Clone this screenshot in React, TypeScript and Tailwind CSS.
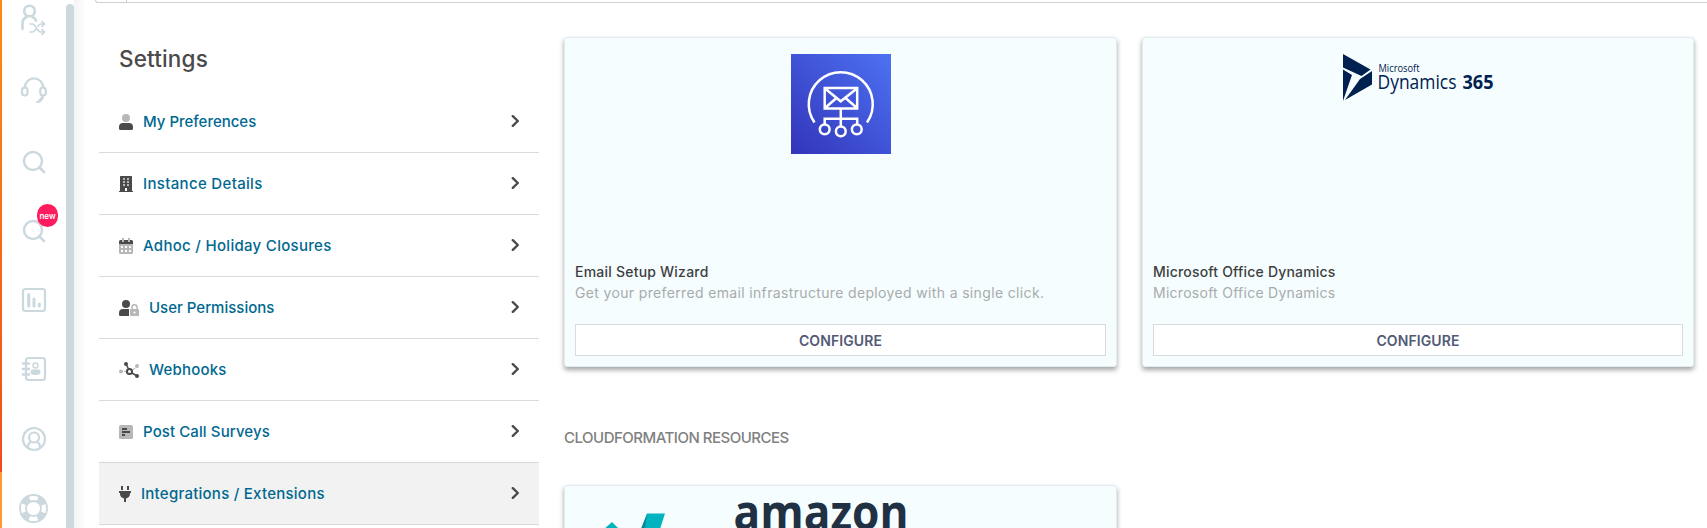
import React from "react";

const MENU_TEXT = "text-[15px] font-medium leading-5 text-[#006890]";

function Chevron() {
  return (
    <svg className="mb-px" width="8" height="12" viewBox="0 0 8 12" fill="none" stroke="#4a4a4a" strokeWidth="2.4">
      <path d="M1.8 1.2 6.8 6 1.8 10.8" strokeLinecap="round" strokeLinejoin="round" />
    </svg>
  );
}

function UserIcon() {
  return (
    <svg className="mt-px" width="14" height="16" viewBox="0 0 14 16">
      <circle cx="7" cy="4" r="4" fill="#b7b7b7" />
      <path d="M0 14.5V13a4 4 0 0 1 4-4h6a4 4 0 0 1 4 4v1.5a1.5 1.5 0 0 1-1.5 1.5h-11A1.5 1.5 0 0 1 0 14.5Z" fill="#4a4a4a" />
    </svg>
  );
}
function BuildingIcon() {
  return (
    <svg className="mt-px" width="14" height="16" viewBox="0 0 14 16">
      <path d="M1.5 0h11a.5.5 0 0 1 .5.5V15h1v1H0v-1h1V.5a.5.5 0 0 1 .5-.5Z" fill="#4a4a4a" />
      <path d="M4 2h2v2H4zM8 2h2v2H8zM4 5h2v2H4zM8 5h2v2H8zM4 8h2v2H4zM8 8h2v2H8z" fill="#b7b7b7" />
      <path d="M6 12h2v3H6z" fill="#fff" />
    </svg>
  );
}
function CalendarIcon() {
  return (
    <svg className="mt-px" width="14" height="16" viewBox="0 0 14 16">
      <path d="M0 6V3.5A1.5 1.5 0 0 1 1.5 2h11A1.5 1.5 0 0 1 14 3.5V6Z" fill="#4a4a4a" />
      <path d="M0 6h14v8.5a1.5 1.5 0 0 1-1.5 1.5h-11A1.5 1.5 0 0 1 0 14.5ZM3 0h2v4H3zM9 0h2v4H9z" fill="#b7b7b7" />
      <path d="M2 8h2v2H2zM6 8h2v2H6zM10 8h2v2h-2zM2 12h2v2H2zM6 12h2v2H6zM10 12h2v2h-2z" fill="#fff" />
    </svg>
  );
}
function UserLockIcon() {
  return (
    <svg className="mt-px" width="20" height="16" viewBox="0 0 20 16">
      <circle cx="7" cy="4" r="4" fill="#4a4a4a" />
      <path d="M0 14.5V13a4 4 0 0 1 4-4h6v7H1.5A1.5 1.5 0 0 1 0 14.5Z" fill="#4a4a4a" />
      <path d="M13 9.5V7.2a2.5 2.5 0 0 1 5 0v2.3" fill="none" stroke="#b7b7b7" strokeWidth="1.5" />
      <rect x="11" y="9" width="9" height="7" rx="1" fill="#b7b7b7" />
      <circle cx="15.5" cy="12.5" r="1.1" fill="#fff" />
    </svg>
  );
}
function WebhookIcon() {
  return (
    <svg className="mt-px" width="20" height="16" viewBox="0 0 20 16">
      <g fill="#b7b7b7">
        <circle cx="2" cy="9.5" r="2" />
        <circle cx="18" cy="4" r="2" />
        <rect x="5" y="9" width="2" height="1" />
        <path d="m13.5 7.5 2.6-2 .6.8-2.6 2z" />
      </g>
      <g fill="none" stroke="#4a4a4a">
        <circle cx="10.5" cy="9.5" r="2.6" strokeWidth="2" />
        <path d="M7.2 2.2 9.5 7M13 11l5 3" strokeWidth="1.5" />
      </g>
      <circle cx="7" cy="2" r="2" fill="#4a4a4a" />
      <circle cx="18" cy="14" r="2" fill="#4a4a4a" />
    </svg>
  );
}
function SurveyIcon() {
  return (
    <svg className="mt-px" width="14" height="16" viewBox="0 0 14 16">
      <rect y="1" width="14" height="14" rx="1.5" fill="#b7b7b7" />
      <path d="M3 4h5v2H3zM3 7h8v2H3zM3 10h3v2H3z" fill="#4a4a4a" />
    </svg>
  );
}
function PlugIcon() {
  return (
    <svg className="mt-px" width="12" height="16" viewBox="0 0 12 16">
      <path d="M2 0h2v4H2zM8 0h2v4H8zM0 5h12v2h-1v1a5 5 0 0 1-4 4.4V16H5v-3.6A5 5 0 0 1 1 8V7H0Z" fill="#4a4a4a" />
    </svg>
  );
}

const MENU = [
  { label: "My Preferences", icon: <UserIcon />, track: "tracking-[-0.01px]" },
  { label: "Instance Details", icon: <BuildingIcon />, track: "tracking-[0.33px]" },
  { label: "Adhoc / Holiday Closures", icon: <CalendarIcon />, track: "tracking-[0.3px]" },
  { label: "User Permissions", icon: <UserLockIcon />, track: "tracking-[0px]" },
  { label: "Webhooks", icon: <WebhookIcon />, track: "tracking-[0.2px]" },
  { label: "Post Call Surveys", icon: <SurveyIcon />, track: "tracking-[0.1px]" },
  { label: "Integrations / Extensions", icon: <PlugIcon />, track: "tracking-[0.25px]", active: true },
];

function Rail() {
  return (
    <svg width="64" height="528" viewBox="2 0 64 528" fill="none" stroke="#cbd8de" strokeWidth="2.2" strokeLinecap="round" strokeLinejoin="round">
      <g>
        <circle cx="29.5" cy="11" r="5.3" strokeWidth="2.6" />
        <path d="M22.5 29v-5.5c0-3 1.5-5.3 4-6.5M32.5 17c1.7.7 2.9 2 3.5 3.5" strokeWidth="2.6" />
        <path d="M30 24h2.5c3 0 4.5 8 8 8h3M30 32h2.5c1.3 0 2-1 2.8-2.3M38 26.2c.8-1.3 1.6-2.2 2.8-2.2H44M42 21.5l2.5 2.5-2.5 2.5M42 29.5l2.5 2.5-2.5 2.5" strokeWidth="1.7" />
      </g>
      <g>
        <rect x="22" y="87.5" width="5.5" height="8" rx="2.7" />
        <rect x="40.3" y="87.5" width="5.5" height="8" rx="2.7" />
        <path d="M24.8 87.5a9.2 9.2 0 0 1 18.4 0M43 95.5c0 3-1 4.5-3.5 4.7M41.5 97.5c0 3-1.5 4.5-4.5 4.5" />
      </g>
      <g>
        <circle cx="33" cy="161" r="9" strokeWidth="2.4" />
        <path d="m39.5 167.5 4.5 4.5" strokeWidth="2.6" />
        <circle cx="33" cy="230" r="9" strokeWidth="2.4" />
        <path d="m39.5 236.5 4.5 4.5" strokeWidth="2.6" />
      </g>
      <g>
        <rect x="23" y="289" width="22" height="22" rx="2.5" />
        <path d="M28.7 294.5v11.5M34 299v7M39.3 304v2" strokeWidth="3" />
      </g>
      <g>
        <rect x="26" y="358" width="19" height="22" rx="2.5" />
        <path d="M23 363.5h6M23 369h6M23 374.5h6" strokeWidth="2.6" />
        <circle cx="35.5" cy="365.5" r="2.5" strokeWidth="1.4" />
        <path d="M30.5 372c0-2 1.5-3 3-2.7 1 .4 2.500 .4 4 0 1.5-.3 3 .7 3 2.7 0 1.5-1 3-5 3s-5-1.5-5-3Z" fill="#cbd8de" stroke="none" />
      </g>
      <g>
        <circle cx="34" cy="439" r="11" />
        <circle cx="34" cy="437.5" r="5" />
        <path d="M28 447.5c0-3 1.2-4.8 3-5.5M40 447.5c0-3-1.2-4.8-3-5.5" />
      </g>
      <g>
        <circle cx="33.5" cy="508.5" r="10.8" strokeWidth="7" strokeDasharray="8.48" strokeDashoffset="-4.24" strokeLinecap="butt" />
        <circle cx="33.5" cy="508.5" r="13.5" strokeWidth="1.8" />
        <circle cx="33.5" cy="508.5" r="7.5" strokeWidth="1.8" />
      </g>
    </svg>
  );
}

function EmailLogo() {
  return (
    <svg width="100" height="100" viewBox="0 0 100 100" fill="none" stroke="#fff" strokeWidth="2.5">
      <defs>
        <linearGradient id="ses" x1="0" y1="1" x2="1" y2="0">
          <stop offset="0" stopColor="#3334b9" />
          <stop offset="1" stopColor="#4d72f3" />
        </linearGradient>
      </defs>
      <rect width="100" height="100" fill="url(#ses)" stroke="none" />
      <path d="M23.5 68.5A32 32 0 1 1 76 68.5" />
      <path d="M33.7 34h32.5v20.5H33.7ZM34 34.5l15.7 12.8 16.2-12.8M34 54l11.5-10M66 54 54.5 44M49.8 54.5V72M33.7 70v-5.2h32.5V70" />
      <circle cx="33.7" cy="75.3" r="4.9" />
      <circle cx="49.8" cy="77.3" r="4.9" />
      <circle cx="65.8" cy="75.3" r="4.9" />
    </svg>
  );
}

function DynamicsLogo() {
  return (
    <svg className="overflow-visible" width="150" height="47" viewBox="0 0 150 47" fill="#002050">
      <path d="M0 0 27.5 15.5 18.5 22 0 13.5ZM0 15.5 9 21 0 47ZM29 17V30.5L2 46 17 25 18.5 24Z" />
      <text x="35.5" y="18" fontSize="11" fontFamily="Open Sans, sans-serif" fontWeight="400" textLength="41" lengthAdjust="spacingAndGlyphs">Microsoft</text>
      <text x="34.5" y="34.7" fontSize="20" fontFamily="Open Sans, sans-serif" fontWeight="400" textLength="79" lengthAdjust="spacingAndGlyphs">Dynamics</text>
      <text x="119.5" y="34.7" fontSize="20" fontFamily="Open Sans, sans-serif" fontWeight="700" textLength="31" lengthAdjust="spacingAndGlyphs">365</text>
    </svg>
  );
}

const CARD = "rounded-[3px] border border-[#e2ebee] bg-[#f5fdff] shadow-[0_3px_5px_rgba(0,0,0,0.36)]";

type CardProps = { title: string; titleTrack: string; text: string; textTrack: string; logo: React.ReactNode };

function Card({ title, titleTrack, text, textTrack, logo }: CardProps) {
  return (
    <article className={`flex h-[330px] flex-col px-2.5 pt-4 pb-2.5 ${CARD}`}>
      <div className="flex h-[207px] shrink-0 items-start justify-center">{logo}</div>
      <h3 className={`text-[14px] font-medium leading-[21px] text-[#3f3f3f] ${titleTrack}`}>{title}</h3>
      <p className={`text-[14px] leading-[21px] text-[#a9abab] ${textTrack}`}>{text}</p>
      <button className="mt-auto h-8 shrink-0 border border-[#d9dbe2] bg-white text-[14px] font-semibold tracking-[0.1px] text-[#525a75]">CONFIGURE</button>
    </article>
  );
}

export default function App() {
  return (
    <div className="flex h-[528px] w-[1707px] overflow-hidden bg-white font-['Inter',sans-serif]">
      <div className="flex w-[2px] shrink-0 flex-col">
        <div className="h-[472px] bg-linear-to-b from-[#ff8a10] to-[#ef4b1c]" />
        <div className="flex-1 bg-[#ff9a2e]" />
      </div>
      <nav className="relative w-16 shrink-0">
        <Rail />
        <span className="absolute left-[35px] top-[204px] flex h-[23px] w-[21px] items-center justify-center rounded-full bg-[#ff1c5e] text-[8px] font-semibold leading-none text-white">new</span>
      </nav>
      <div className="mt-1 h-[540px] w-2 shrink-0 rounded-t bg-[#cbd8de]" />
      <main className="flex min-w-0 flex-1 flex-col bg-linear-to-r from-[#f3f3f3] to-white to-[12px]">
        <div className="ml-[21px] h-[3px] shrink-0 rounded-bl-lg border-b border-l border-[#cfcfcf]">
          <div className="ml-[30px] h-[2px] w-px bg-[#cfcfcf]" />
        </div>
        <div className="flex pl-[25px]">
          <aside className="w-[440px] shrink-0">
            <h1 className="ml-5 mt-[40px] h-[38px] text-[22.5px] font-medium leading-8 tracking-[0.15px] text-[#4a4a4a]">Settings</h1>
            <ul className="mt-[10px]">
              {MENU.map((m) => (
                <li key={m.label} className={`flex h-[62px] items-center border-b border-[#dadada] px-5 ${m.active ? "bg-[#f2f2f2]" : ""}`}>
                  {m.icon}
                  <span className={`ml-[10px] flex-1 ${MENU_TEXT} ${m.track}`}>{m.label}</span>
                  <Chevron />
                </li>
              ))}
            </ul>
          </aside>
          <section className="ml-[25px] w-[1130px] shrink-0 pt-[34px]">
            <div className="grid grid-cols-[553px_552px] gap-[25px]">
              <Card
                title="Email Setup Wizard"
                titleTrack="tracking-[0.22px]"
                text="Get your preferred email infrastructure deployed with a single click."
                textTrack="tracking-[0.35px]"
                logo={<EmailLogo />}
              />
              <Card
                title="Microsoft Office Dynamics"
                titleTrack="tracking-[0.19px]"
                text="Microsoft Office Dynamics"
                textTrack="tracking-[0.27px]"
                logo={<DynamicsLogo />}
              />
            </div>
            <h2 className="mt-[60px] h-[58px] text-[15px] font-medium leading-[22px] tracking-[-0.5px] text-[#808080]">CLOUDFORMATION RESOURCES</h2>
            <div className={`h-[100px] w-[553px] pt-4 ${CARD}`}>
              <svg width="551" height="60" viewBox="0 0 551 60">
                <path d="M38 28 47 20 55 28ZM82 11.5H100L94 30H75Z" fill="#00b4bf" />
                <path d="M82 12 80 26 76 27Z" fill="#088a94" />
                <text x="168.5" y="28" fontFamily="Open Sans, sans-serif" fontSize="50" fontWeight="700" fill="#213144" textLength="175" lengthAdjust="spacingAndGlyphs">amazon</text>
              </svg>
            </div>
          </section>
        </div>
      </main>
    </div>
  );
}
